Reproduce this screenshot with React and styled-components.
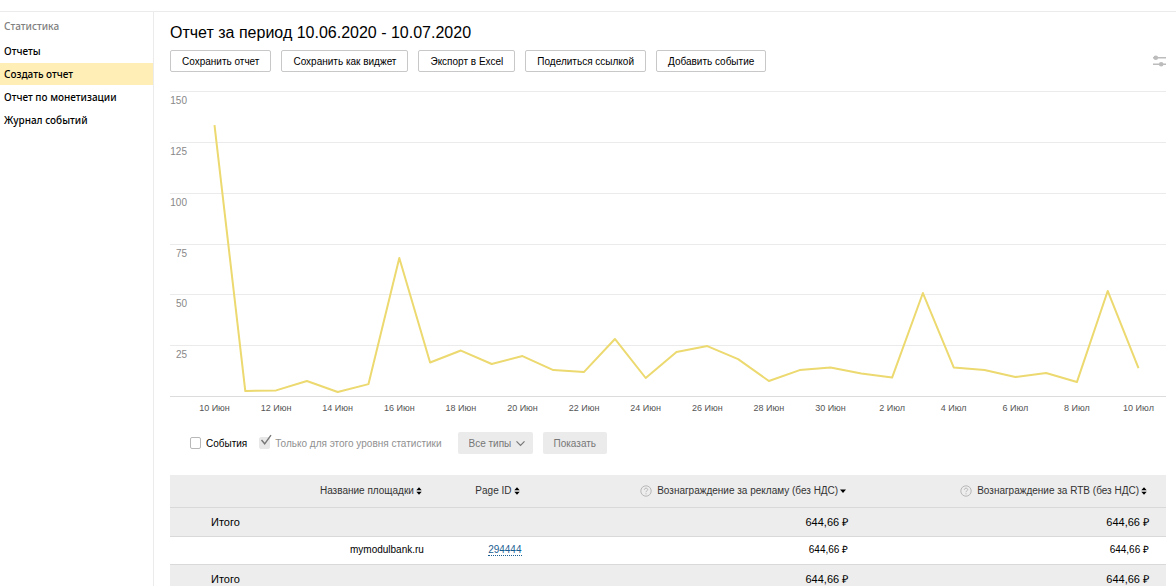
import React from 'react'
import styled, { createGlobalStyle } from 'styled-components'

const GlobalStyle = createGlobalStyle`
  html {
    scrollbar-width: none;
  }

  body {
    margin: 0;
    background: #fff;
    color: #000;
    font-family: "Liberation Sans", Arial, sans-serif;
    font-size: 10px;
  }

  button, input, select {
    font: inherit;
    margin: 0;
  }
`

const Page = styled.div`
  display: flex;
  flex-direction: column;
  min-height: 100vh;
`

const TopBar = styled.header`
  height: 11px;
  border-bottom: 1px solid #ebebeb;
`

const Body = styled.div`
  display: flex;
  flex: 1;
`

const Sidebar = styled.nav`
  flex: 0 0 153px;
  padding-top: 3px;
  border-right: 1px solid #ebebeb;
  font-family: "Noto Sans", Verdana, sans-serif;
  font-size: 10px;
  font-weight: 500;
`

const SidebarTitle = styled.div`
  padding-left: 4px;
  margin-bottom: 3px;
  line-height: 22px;
  color: #808080;
`

const SidebarLink = styled.a`
  display: block;
  padding-left: 4px;
  margin-bottom: 1px;
  line-height: 22px;
  color: #000;
  text-decoration: none;
  background: ${props => props.$active ? '#ffeeb5' : 'none'};
`

const Main = styled.main`
  flex: 1;
  min-width: 0;
  padding: 10px 10px 0 16px;
`

const Title = styled.h1`
  margin: 0;
  font-size: 16px;
  font-weight: 400;
  line-height: 22px;
`

const Toolbar = styled.div`
  display: flex;
  align-items: center;
  gap: 10px;
  margin-top: 6px;
`

const Button = styled.button`
  height: 22px;
  padding: 0 11px;
  border: 1px solid #c8c8c8;
  border-radius: 2px;
  background: #fff;
  color: #000;
  white-space: nowrap;
`

const IconButton = styled.button`
  display: flex;
  margin-left: auto;
  padding: 0;
  border: 0;
  background: none;
`

const Chart = styled.svg`
  display: block;
  width: 100%;
  height: auto;
  margin-top: 19px;
  overflow: visible;
`

const AxisText = styled.text`
  font-size: ${props => props.$small ? 9 : 10}px;
  fill: ${props => props.$small ? '#555' : '#888'};
`

const Filters = styled.div`
  display: flex;
  align-items: center;
  height: 22px;
  margin-top: 17px;
  padding-left: 20px;
`

const CheckLabel = styled.label`
  display: flex;
  align-items: center;
  margin-right: ${props => props.$muted ? 16 : 12}px;
  color: ${props => props.$muted ? '#909090' : '#000'};
  white-space: nowrap;
`

const CheckWrap = styled.span`
  position: relative;
  display: flex;
  margin-right: 5px;
`

const Checkbox = styled.input`
  appearance: none;
  box-sizing: border-box;
  width: 11px;
  height: 12px;
  border: 1px solid #b8b8b8;
  border-radius: 2px;
  background: #fff;

  &:disabled {
    border-color: #e8e8e8;
    background: #e8e8e8;
  }
`

const Tick = styled.svg`
  position: absolute;
  left: 1px;
  bottom: 3px;
`

const SelectWrap = styled.div`
  position: relative;
  margin-right: 10px;
`

const Select = styled.select`
  display: block;
  appearance: none;
  height: 22px;
  padding: 0 21px 0 11px;
  border: 0;
  border-radius: 2px;
  background: #ebebeb;
  color: #777;
  opacity: 1;
`

const Chevron = styled.svg`
  position: absolute;
  top: 8px;
  right: 8px;
  pointer-events: none;
`

const ShowButton = styled.button`
  height: 22px;
  padding: 0 11px;
  border: 0;
  border-radius: 2px;
  background: #ebebeb;
  color: #777;
`

const Table = styled.table`
  width: 100%;
  margin-top: 21px;
  border-collapse: collapse;
  table-layout: fixed;
`

const Row = styled.tr`
  height: ${props => props.$height}px;
  background: ${props => props.$plain ? '#fff' : '#ededed'};
  border-bottom: 1px solid #d9d9d9;
`

const HeadCell = styled.th`
  box-sizing: border-box;
  width: ${props => props.$width};
  padding: 0 19px 0 0;
  color: #333;
  font-weight: 400;
`

const HeadContent = styled.div`
  display: flex;
  align-items: center;
  justify-content: flex-end;
  gap: 2px;
  white-space: nowrap;
`

const Hint = styled.svg`
  margin-right: 3px;
`

const Cell = styled.td`
  padding: 0 17px 0 ${props => props.$label ? 41 : 0}px;
  font-size: ${props => props.$small ? 10 : 11}px;
  line-height: 14px;
  text-align: ${props => props.$label ? 'left' : 'right'};
`

const IdLink = styled.a`
  color: #1a5e92;
  text-decoration: none;
  border-bottom: 1px dotted #1a5e92;
`

const menu = ['Отчеты', 'Создать отчет', 'Отчет по монетизации', 'Журнал событий']

const actions = [
  'Сохранить отчет',
  'Сохранить как виджет',
  'Экспорт в Excel',
  'Поделиться ссылкой',
  'Добавить событие'
]

const values = [
  133.5, 2.7, 3, 7.6, 2.2, 6.1, 68.1, 16.7, 22.6, 16, 19.9, 13, 12.1, 28.3, 9.1, 21.9,
  24.8, 18.4, 7.6, 13, 14.3, 11.3, 9.3, 50.9, 14.3, 13, 9.6, 11.6, 7.1, 51.9, 14
]

const dates = [
  '10 Июн', '12 Июн', '14 Июн', '16 Июн', '18 Июн', '20 Июн', '22 Июн', '24 Июн',
  '26 Июн', '28 Июн', '30 Июн', '2 Июл', '4 Июл', '6 Июл', '8 Июл', '10 Июл'
]

const ticks = [150, 125, 100, 75, 50, 25, 0]

const columns = [
  { title: 'Название площадки', width: '27.2%' },
  { title: 'Page ID', width: '9.8%' },
  { title: 'Вознаграждение за рекламу (без НДС)', width: '32.8%', hint: true, sorted: true },
  { title: 'Вознаграждение за RTB (без НДС)', width: '30.2%', hint: true }
]

const SUM = '644,66 ₽'

const pointX = i => 44.5 + i * 30.8
const pointY = value => 305.5 - value * 2.033

const SortIcon = ({ sorted }) => (
  <svg width='6' height='8' viewBox='0 0 6 8'>
    {sorted
      ? <path d='M0 2.5h6L3 6z'/>
      : <path d='M.3 3.2h5.4L3 .2zM.3 4.8h5.4L3 7.8z'/>
    }
  </svg>
)

const HintIcon = () => (
  <Hint width='12' height='12' viewBox='0 0 12 12' fill='none' stroke='#aaa'>
    <circle cx='6' cy='6' r='5.2' strokeWidth='.8'/>
    <path d='M4.3 4.8C4.3 2.6 7.8 2.7 7.7 4.7 7.6 5.8 6 5.8 6 7.2M6 8.3v1' strokeWidth='.8'/>
  </Hint>
)

const ReportChart = () => (
  <Chart viewBox='0 0 996 324' role='img' aria-label='График отчета'>
    {ticks.map(tick => {
      const y = Math.floor(pointY(tick)) + 0.5
      return (
        <g key={tick}>
          <line x1='0' x2='996' y1={y} y2={y} stroke={tick ? '#ebebeb' : '#dcdcdc'}/>
          {tick > 0 && <AxisText x='17' y={y + 12.5} textAnchor='end'>{tick}</AxisText>}
        </g>
      )
    })}
    <polyline
      points={values.map((value, i) => `${pointX(i)},${pointY(value)}`).join(' ')}
      fill='none'
      stroke='#ecd96f'
      strokeWidth='2'
      strokeLinejoin='round'
    />
    {dates.map((date, i) => (
      <AxisText key={date} $small x={pointX(i * 2)} y='320' textAnchor='middle'>{date}</AxisText>
    ))}
  </Chart>
)

const TotalRow = () => (
  <Row $height={29}>
    <Cell $label>Итого</Cell>
    <Cell/>
    <Cell>{SUM}</Cell>
    <Cell>{SUM}</Cell>
  </Row>
)

class App extends React.Component {
  constructor (props) {
    super(props)
    this.state = {
      events: false
    }
  }

  render () {
    return (
      <Page>
        <GlobalStyle/>
        <TopBar/>
        <Body>
          <Sidebar>
            <SidebarTitle>Статистика</SidebarTitle>
            {menu.map((item, i) => (
              <SidebarLink key={item} href='#' $active={i === 1}>{item}</SidebarLink>
            ))}
          </Sidebar>
          <Main>
            <Title>Отчет за период 10.06.2020 - 10.07.2020</Title>
            <Toolbar>
              {actions.map(action => <Button key={action} type='button'>{action}</Button>)}
              <IconButton type='button' aria-label='Настройки'>
                <svg width='13' height='12' viewBox='0 0 13 12' fill='#bcbcbc'>
                  <path d='M0 2h13v1.5H0zM0 8.5h13V10H0z'/>
                  <circle cx='2.8' cy='2.8' r='2.3'/>
                  <circle cx='8.2' cy='9.2' r='2.3'/>
                </svg>
              </IconButton>
            </Toolbar>
            <ReportChart/>
            <Filters>
              <CheckLabel>
                <CheckWrap>
                  <Checkbox
                    type='checkbox'
                    checked={this.state.events}
                    onChange={e => this.setState({ events: e.target.checked })}
                  />
                </CheckWrap>
                События
              </CheckLabel>
              <CheckLabel $muted>
                <CheckWrap>
                  <Checkbox type='checkbox' checked disabled readOnly/>
                  <Tick width='12' height='12' viewBox='0 0 12 12' fill='none' stroke='#777' strokeWidth='1.4'>
                    <path d='M1.5 6l3.2 3.8L11 1.2'/>
                  </Tick>
                </CheckWrap>
                Только для этого уровня статистики
              </CheckLabel>
              <SelectWrap>
                <Select disabled aria-label='Типы событий'>
                  <option>Все типы</option>
                </Select>
                <Chevron width='9' height='7' viewBox='0 0 9 7' fill='none' stroke='#777' strokeWidth='1.2'>
                  <path d='M.5 1.3l4 4 4-4'/>
                </Chevron>
              </SelectWrap>
              <ShowButton type='button' disabled>Показать</ShowButton>
            </Filters>
            <Table>
              <thead>
                <Row $height={32}>
                  {columns.map(column => (
                    <HeadCell key={column.title} $width={column.width}>
                      <HeadContent>
                        {column.hint && <HintIcon/>}
                        {column.title}
                        <SortIcon sorted={column.sorted}/>
                      </HeadContent>
                    </HeadCell>
                  ))}
                </Row>
              </thead>
              <tbody>
                <TotalRow/>
                <Row $height={28} $plain>
                  <Cell $small>mymodulbank.ru</Cell>
                  <Cell $small><IdLink href='#'>294444</IdLink></Cell>
                  <Cell $small>{SUM}</Cell>
                  <Cell $small>{SUM}</Cell>
                </Row>
                <TotalRow/>
              </tbody>
            </Table>
          </Main>
        </Body>
      </Page>
    )
  }
}

export default App
